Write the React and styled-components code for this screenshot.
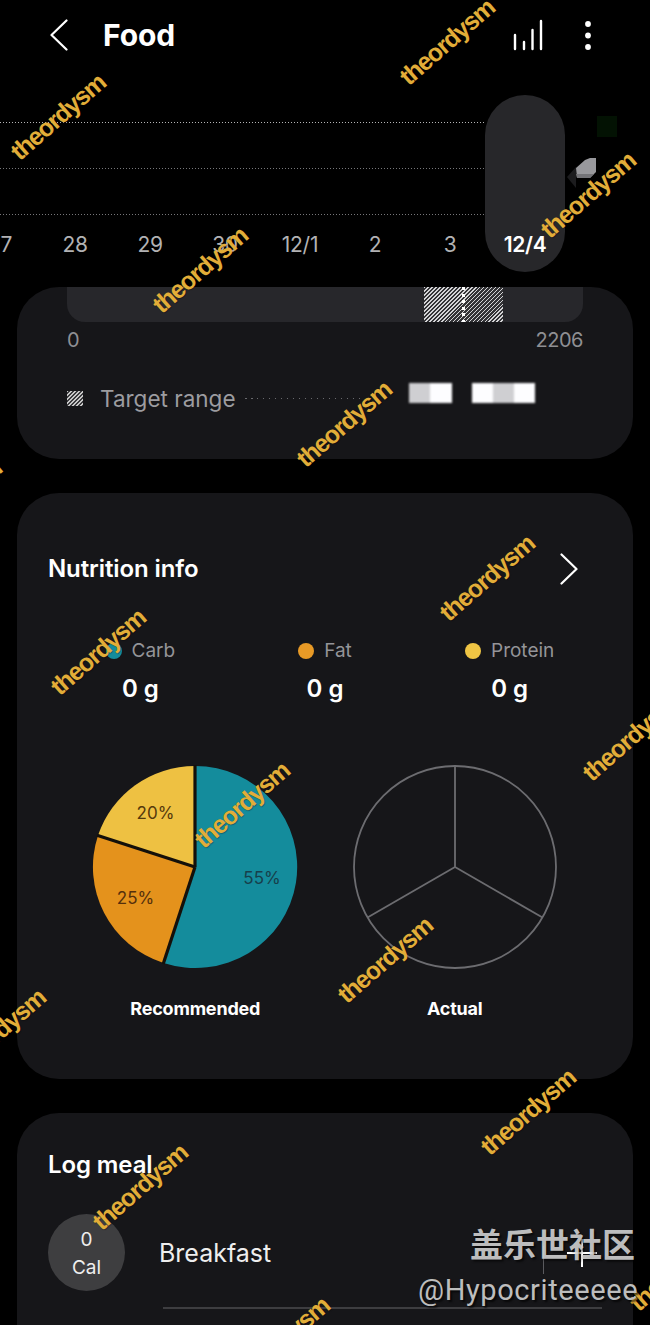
import React from 'react'
import styled, { createGlobalStyle } from 'styled-components'

const GlobalStyle = createGlobalStyle`
 html, body {
  margin: 0;
  padding: 0;
  background: #000;
 }
 * {
  box-sizing: border-box;
 }
`

const Page = styled.div`
 position: relative;
 width: 650px;
 height: 1325px;
 overflow: hidden;
 background: #000;
 color: #fff;
 font-family: Inter, "Noto Sans", sans-serif;
`

const Header = styled.header`
 display: flex;
 align-items: center;
 height: 70px;
 padding: 0 58px 0 50px;
`

const Title = styled.h1`
 margin: 0 0 0 35px;
 font-size: 30px;
 font-weight: 700;
 letter-spacing: -0.1px;
`

const HeaderIcons = styled.div`
 display: flex;
 align-items: center;
 gap: 41px;
 margin-left: auto;
`

const Chart = styled.section`
 position: relative;
 height: 217px;
 padding-top: 52px;
`

const GridLines = styled.div`
 display: flex;
 flex-direction: column;
 gap: 45px;
 width: 485px;
`

const GridLine = styled.div`
 height: 1px;
 background: repeating-linear-gradient(
  90deg,
  ${(p) => (p.$strong ? '#b4b4b6' : '#77777a')} 0 1px,
  transparent 1px 3px
 );
`

const DayPill = styled.div`
 position: absolute;
 top: 25px;
 left: 485px;
 width: 80px;
 height: 177px;
 border-radius: 40px;
 background: #27272a;
`

const Days = styled.div`
 position: relative;
 display: grid;
 grid-template-columns: repeat(8, 75px);
 margin: 17px 0 0 -37.5px;
`

const Day = styled.span`
 font-size: 21px;
 line-height: 26px;
 text-align: center;
 color: ${(p) => (p.$active ? '#fff' : '#b2b2b4')};
 font-weight: ${(p) => (p.$active ? 600 : 400)};
 letter-spacing: -0.3px;
`

const BarEdge = styled.svg`
 position: absolute;
 top: 46px;
 left: 566px;
`

const Card = styled.section`
 margin: 0 17px 34px;
 padding: ${(p) => p.$top || 0}px 31px 0;
 height: ${(p) => p.$height}px;
 border-radius: 42px;
 background: #161619;
`

const GoalBar = styled.div`
 position: relative;
 display: flex;
 justify-content: flex-end;
 height: 35px;
 margin: 0 19px;
 padding-right: 80px;
 border-radius: 0 0 18px 18px;
 background: #27272b;
`

const HatchZone = styled.div`
 position: relative;
 width: 79px;
 background: repeating-linear-gradient(135deg, #d4d4d6 0 1.1px, #333336 1.1px 2.8px);
`

const Marker = styled.div`
 position: absolute;
 top: 0;
 bottom: 0;
 left: 38px;
 width: 3px;
 background: repeating-linear-gradient(180deg, #fff 0 3px, transparent 3px 6.6px);
`

const Scale = styled.div`
 display: flex;
 justify-content: space-between;
 margin: 6px 19px 0;
 font-size: 20px;
 line-height: 24px;
 color: #8f8f93;
 letter-spacing: -0.5px;
`

const RangeRow = styled.div`
 display: flex;
 align-items: center;
 height: 28px;
 margin: 32px 19px 0;
`

const RangeSwatch = styled.div`
 width: 16px;
 height: 15px;
 background: repeating-linear-gradient(135deg, #c8c8c8 0 1.1px, #3a3a3d 1.1px 2.8px);
`

const RangeLabel = styled.span`
 margin-left: 17px;
 font-size: 22.5px;
 color: #9c9ca0;
`

const Leader = styled.div`
 width: 120px;
 height: 1px;
 margin-left: 9px;
 background: repeating-linear-gradient(90deg, #6a6a6e 0 1.5px, transparent 1.5px 6px);
`

const Blurred = styled.div`
 width: ${(p) => p.$width}px;
 height: 20px;
 margin: -10px 0 0 ${(p) => p.$gap}px;
 background: ${(p) => p.$fill};
 filter: blur(1px);
`

const CardHead = styled.div`
 display: flex;
 align-items: center;
 justify-content: space-between;
 height: 32px;
 padding-right: 24px;
`

const CardTitle = styled.h2`
 margin: 0;
 font-size: 24px;
 line-height: 32px;
 font-weight: 600;
 letter-spacing: -0.1px;
`

const Legend = styled.div`
 display: grid;
 grid-template-columns: repeat(3, 1fr);
 margin-top: 53px;
`

const Macro = styled.div`
 display: flex;
 flex-direction: column;
 align-items: center;
`

const MacroName = styled.div`
 display: flex;
 align-items: center;
 gap: 10px;
 font-size: 19px;
 line-height: 26px;
 color: #949498;
`

const Dot = styled.span`
 width: 16px;
 height: 16px;
 border-radius: 50%;
 background: ${(p) => p.$color};
`

const MacroValue = styled.div`
 margin-top: 10px;
 font-size: 24px;
 line-height: 30px;
 font-weight: 600;
`

const Pies = styled.div`
 display: grid;
 grid-template-columns: repeat(2, 259.5px);
 margin: 58px 0 0 17.5px;
`

const PieColumn = styled.figure`
 display: flex;
 flex-direction: column;
 align-items: center;
 margin: 0;
`

const PieCaption = styled.figcaption`
 margin-top: 25px;
 font-size: 18px;
 line-height: 24px;
 font-weight: 700;
 letter-spacing: -0.2px;
`

const MealRow = styled.div`
 display: flex;
 align-items: center;
 margin-top: 33px;
`

const CalBadge = styled.div`
 display: flex;
 flex-direction: column;
 align-items: center;
 justify-content: center;
 width: 77px;
 height: 77px;
 padding-top: 2px;
 border-radius: 50%;
 background: #3e3e40;
 font-size: 19px;
 line-height: 28px;
 color: #eee;
`

const MealName = styled.span`
 margin-left: 34px;
 font-size: 25px;
 color: #eee;
`

const MealSeparator = styled.div`
 width: 1px;
 height: 28px;
 margin: 14px 0 0 auto;
 background: #5a5a5e;
`

const MealAdd = styled.svg`
 margin: 0 5px 0 23px;
`

const MealDivider = styled.div`
 height: 2px;
 margin: 16px 0 0 115px;
 background: #3d3d40;
`

const Watermark = styled.span`
 position: absolute;
 left: ${(p) => p.$x}px;
 top: ${(p) => p.$y}px;
 transform: translate(-50%, -50%) rotate(-41deg);
 font-family: "Liberation Sans", Arial, sans-serif;
 font-size: 25px;
 font-weight: 700;
 letter-spacing: -1.3px;
 white-space: nowrap;
 color: #e2ad38;
 text-shadow: 0 1px 1px rgba(0, 0, 0, 0.35);
`

const ForumMark = styled.div`
 position: absolute;
 left: 470px;
 top: 1222px;
 font-family: "Noto Sans CJK SC", sans-serif;
 font-size: 33px;
 line-height: 42px;
 font-weight: 700;
 white-space: nowrap;
 color: rgba(214, 214, 214, 0.88);
 text-shadow: 2px 2px 2px rgba(0, 0, 0, 0.6);
`

const ForumUser = styled.div`
 position: absolute;
 left: 418px;
 top: 1271px;
 font-family: Roboto, sans-serif;
 font-size: 29px;
 line-height: 38px;
 letter-spacing: 0.6px;
 white-space: nowrap;
 color: #bdbdbd;
 text-shadow: 2px 2px 2px rgba(0, 0, 0, 0.7);
`

const days = ['27', '28', '29', '30', '12/1', '2', '3', '12/4']

const macros = [
 { name: 'Carb', color: '#148c9c' },
 { name: 'Fat', color: '#e89a26' },
 { name: 'Protein', color: '#efc544' },
]

const watermarks = [
 [447, 42], [58, 117], [588, 195], [200, 270], [344, 424], [-46, 503],
 [487, 578], [98, 652], [630, 738], [242, 805], [385, 960], [-2, 1032],
 [528, 1112], [140, 1187], [282, 1340], [677, 1268],
]

function Chevron({ left }) {
 return (
  <svg width="18" height="32" viewBox="0 0 18 32" fill="none" stroke="#fff" strokeWidth="2.2" strokeLinecap="round" strokeLinejoin="round">
   <polyline points={left ? '16.5,1.5 1.5,16 16.5,30.5' : '1.5,1.5 16.5,16 1.5,30.5'} />
  </svg>
 )
}

function StatsIcon() {
 return (
  <svg width="31" height="32" viewBox="0 0 31 32" stroke="#fff" strokeWidth="2.4" strokeLinecap="round">
   <line x1="3" y1="16" x2="3" y2="30" />
   <line x1="12" y1="23" x2="12" y2="30" />
   <line x1="20.5" y1="11" x2="20.5" y2="30" />
   <line x1="29" y1="2" x2="29" y2="30" />
  </svg>
 )
}

function KebabIcon() {
 return (
  <svg width="8" height="32" viewBox="0 0 8 32" fill="#fff">
   <circle cx="4" cy="5" r="2.9" />
   <circle cx="4" cy="16.5" r="2.9" />
   <circle cx="4" cy="28" r="2.9" />
  </svg>
 )
}

function RecommendedPie() {
 return (
  <svg width="210" height="210" viewBox="0 0 210 210">
   <path d="M105 105 L105 4 A102 101 0 1 1 73.5 201 Z" fill="#148c9c" />
   <path d="M105 105 L73.5 201 A102 101 0 0 1 8 73.5 Z" fill="#e4921c" />
   <path d="M105 105 L8 73.5 A102 101 0 0 1 105 4 Z" fill="#eec142" />
   <g stroke="#14100a" strokeWidth="3.2">
    <line x1="105" y1="105" x2="105" y2="3" />
    <line x1="105" y1="105" x2="73.2" y2="202" />
    <line x1="105" y1="105" x2="7" y2="73.2" />
   </g>
   <g fontFamily="Inter, sans-serif" fontSize="17" textAnchor="middle">
    <text x="172" y="122" fill="#173f4b">55%</text>
    <text x="45.5" y="142" fill="#55300c">25%</text>
    <text x="65.5" y="57" fill="#55390c">20%</text>
   </g>
  </svg>
 )
}

function ActualPie() {
 return (
  <svg width="210" height="210" viewBox="0 0 210 210" fill="none" stroke="#6c6c70" strokeWidth="1.8">
   <circle cx="105" cy="105" r="101" />
   <line x1="105" y1="105" x2="105" y2="4" />
   <line x1="105" y1="105" x2="192.5" y2="155.5" />
   <line x1="105" y1="105" x2="17.5" y2="155.5" />
  </svg>
 )
}

export default function App() {
 return (
  <Page>
   <GlobalStyle />
   <Header>
    <Chevron left />
    <Title>Food</Title>
    <HeaderIcons>
     <StatsIcon />
     <KebabIcon />
    </HeaderIcons>
   </Header>

   <Chart>
    <GridLines>
     <GridLine $strong />
     <GridLine />
     <GridLine />
    </GridLines>
    <DayPill />
    <BarEdge width="60" height="80" viewBox="0 0 60 80">
     <rect x="31" y="0" width="20" height="21" fill="#031203" />
     <path d="M1 61 L10 51 L10 72 Z" fill="#1c1c1e" />
     <path d="M10 52 L19 44 L24 42 L30 42 L30 56 L24 62 L11 62 Z" fill="#98989c" />
     <path d="M10 58 L28 58 L24 62 L11 62 Z" fill="#737377" />
    </BarEdge>
    <Days>
     {days.map((day) => (
      <Day key={day} $active={day === '12/4'}>{day}</Day>
     ))}
    </Days>
   </Chart>

   <Card $height={172}>
    <GoalBar>
     <HatchZone>
      <Marker />
     </HatchZone>
    </GoalBar>
    <Scale>
     <span>0</span>
     <span>2206</span>
    </Scale>
    <RangeRow>
     <RangeSwatch />
     <RangeLabel>Target range</RangeLabel>
     <Leader />
     <Blurred $width={43} $gap={44} $fill="linear-gradient(90deg, #cfcfd2 0 50%, #fdfdff 50%)" />
     <Blurred $width={63} $gap={20} $fill="linear-gradient(90deg, #fdfdff 0 33%, #cfcfd2 33% 66%, #fdfdff 66%)" />
    </RangeRow>
   </Card>

   <Card $height={586} $top={60}>
    <CardHead>
     <CardTitle>Nutrition info</CardTitle>
     <Chevron />
    </CardHead>
    <Legend>
     {macros.map((macro) => (
      <Macro key={macro.name}>
       <MacroName>
        <Dot $color={macro.color} />
        {macro.name}
       </MacroName>
       <MacroValue>0 g</MacroValue>
      </Macro>
     ))}
    </Legend>
    <Pies>
     <PieColumn>
      <RecommendedPie />
      <PieCaption>Recommended</PieCaption>
     </PieColumn>
     <PieColumn>
      <ActualPie />
      <PieCaption>Actual</PieCaption>
     </PieColumn>
    </Pies>
   </Card>

   <Card $height={300} $top={36}>
    <CardTitle>Log meal</CardTitle>
    <MealRow>
     <CalBadge>
      <span>0</span>
      <span>Cal</span>
     </CalBadge>
     <MealName>Breakfast</MealName>
     <MealSeparator />
     <MealAdd width="30" height="28" viewBox="0 0 30 28" stroke="#fff" strokeWidth="2">
      <line x1="0" y1="14" x2="30" y2="14" />
      <line x1="15" y1="0" x2="15" y2="28" />
     </MealAdd>
    </MealRow>
    <MealDivider />
   </Card>

   {watermarks.map(([x, y]) => (
    <Watermark key={`${x}-${y}`} $x={x} $y={y}>theordysm</Watermark>
   ))}
   <ForumMark>盖乐世社区</ForumMark>
   <ForumUser>@Hypocriteeeee</ForumUser>
  </Page>
 )
}
